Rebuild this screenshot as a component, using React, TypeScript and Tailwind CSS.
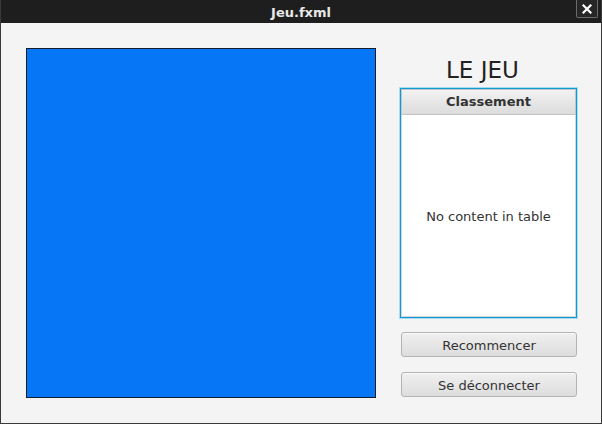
import React from 'react';

const font = "font-['DejaVu_Sans',_'Liberation_Sans',_sans-serif]";

const Button = ({ label }: { label: string }) => (
  <button className="w-[176px] h-[25px] ml-[1px] pt-[2px] rounded-[3px] border border-[#b4b4b4] bg-gradient-to-b from-[#f0f0f0] to-[#dddddd] text-[13px] text-[#333333] leading-none shadow-[inset_0_1px_0_#fafafa]">
    {label}
  </button>
);

const App = () => {
  return (
    <div className={`w-[602px] h-[424px] flex flex-col bg-[#f4f4f4] border-x border-b border-[#3a3a3a] ${font}`}>
      {/* title bar */}
      <div className="relative h-[23px] shrink-0 bg-[#1e1e1e] flex items-center justify-center">
        <span className="text-[13px] font-bold text-[#e8e8e8] leading-none mt-[1px]">Jeu.fxml</span>
        <div className="absolute right-[3px] top-0 w-[22px] h-[18px] border border-t-0 border-[#6a6a6a] rounded-b-[2px] bg-[#262626] flex items-center justify-center">
          <svg width="10" height="10" viewBox="0 0 10 10">
            <path d="M1.5 1.5 L8.5 8.5 M8.5 1.5 L1.5 8.5" stroke="#ffffff" strokeWidth="2.2" strokeLinecap="square" />
          </svg>
        </div>
      </div>

      <div className="flex flex-1">
        {/* board */}
        <div className="ml-[25px] mt-[25px] w-[350px] h-[350px] bg-[#0676f7] border border-[#141c2a]" />

        {/* side column */}
        <div className="ml-[24px] w-[177px] flex flex-col">
          <div className="mt-[35px] h-[24px] pl-[46px] text-[23px] leading-[24px] text-[#222222]">LE JEU</div>

          <div className="mt-[6px] h-[230px] flex flex-col border border-[#0e9ad6] shadow-[0_0_0_1px_#a8dcf1] bg-white">
            <div className="h-[26px] shrink-0 flex items-center justify-center border border-[#c4c4c4] bg-gradient-to-b from-[#f2f2f2] to-[#dcdcdc] text-[13px] font-bold text-[#333333]">
              Classement
            </div>
            <div className="flex-1 flex items-center justify-center text-[13px] text-[#333333] pt-[2px] border-x border-b border-[#d6d6d6]">
              No content in table
            </div>
          </div>

          <div className="mt-[14px]">
            <Button label="Recommencer" />
          </div>
          <div className="mt-[15px]">
            <Button label="Se déconnecter" />
          </div>
        </div>
      </div>
    </div>
  );
};

export default App;
